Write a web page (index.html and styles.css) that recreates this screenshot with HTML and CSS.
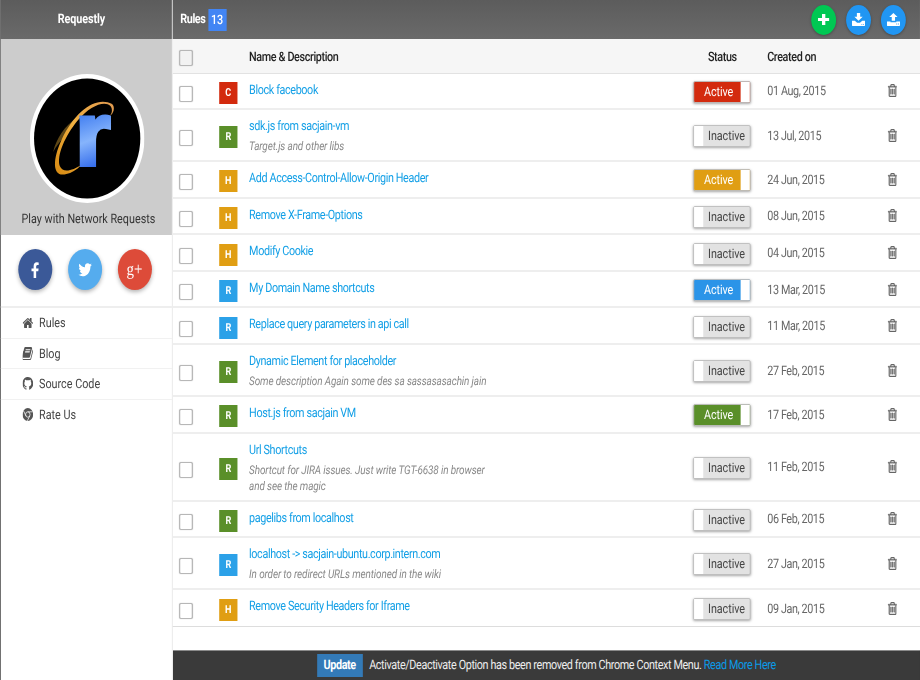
FILE: index.html
```html
<!DOCTYPE html>
<html lang="en">
<head>
<meta charset="utf-8">
<title>Requestly</title>
<link rel="stylesheet" href="styles.css">
</head>
<body>
<svg class="sprite" width="0" height="0" aria-hidden="true">
  <symbol id="i-home" viewBox="64 128 1664 1408"><path d="M1472 992v480q0 26-19 45t-45 19h-384v-384h-256v384h-384q-26 0-45-19t-19-45v-480q0-1 .5-3t.5-3l575-474 575 474q1 2 1 6zm223-69l-62 74q-8 9-21 11h-3q-13 0-21-7l-692-577-692 577q-12 8-24 7-13-2-21-11l-62-74q-8-10-7-23.5t11-21.5l719-599q32-26 76-26t76 26l244 204v-195q0-14 9-23t23-9h192q14 0 23 9t9 23v408l219 182q10 8 11 21.5t-7 23.5z"/></symbol>
  <symbol id="i-book" viewBox="128 128 1536 1536"><path d="M1639 478q40 57 18 129l-275 906q-19 64-76.5 107.5t-122.5 43.5h-923q-77 0-148.5-53.5t-99.5-131.5q-24-67-2-127 0-4 3-27t4-37q1-8-3-21.5t-3-19.5q2-11 8-21t16.5-23.5 16.5-23.5q23-38 45-91.5t30-91.5q3-10 .5-30t-.5-28q3-11 17-28t17-23q21-36 42-92t25-90q1-9-2.5-32t.5-28q4-13 22-30.5t22-22.5q19-26 42.5-84.5t27.5-96.5q1-8-3-25.5t-2-26.5q2-8 9-18t18-23 17-21q8-12 16.5-30.5t15-35 16-36 19.5-32 26.5-23.5 36-11.5 47.5 5.5l-1 3q38-9 51-9h761q74 0 114 56t18 130l-274 906q-36 119-71.5 153.5t-128.5 34.5h-869q-27 0-38 15-11 16-1 43 24 70 144 70h923q29 0 56-15.5t35-41.5l300-987q7-22 5-57 38 15 59 43zm-1064 2q-4 13 2 22.5t20 9.5h608q13 0 25.5-9.5t16.5-22.5l21-64q4-13-2-22.5t-20-9.5h-608q-13 0-25.5 9.5t-16.5 22.5zm-83 256q-4 13 2 22.5t20 9.5h608q13 0 25.5-9.5t16.5-22.5l21-64q4-13-2-22.5t-20-9.5h-608q-13 0-25.5 9.5t-16.5 22.5z"/></symbol>
  <symbol id="i-github" viewBox="128 128 1536 1536"><path d="M896 128q209 0 385.5 103t279.5 279.5 103 385.5q0 251-146.5 451.5t-378.5 277.5q-27 5-40-7t-13-30q0-3 .5-76.5t.5-134.5q0-97-52-142 57-6 102.5-18t94-39 81-66.5 53-105 20.5-150.5q0-119-79-206 37-91-8-204-28-9-81 11t-92 44l-38 24q-93-26-192-26t-192 26q-16-11-42.5-27t-83.5-38.5-85-13.5q-45 113-8 204-79 87-79 206 0 85 20.5 150t52.5 105 80.5 67 94 39 102.5 18q-39 36-49 103-21 10-45 15t-57 5-65.5-21.5-55.5-62.5q-19-32-48.5-52t-49.5-24l-20-3q-21 0-29 4.5t-5 11.5 9 14 13 12l7 5q22 10 43.5 38t31.5 51l10 23q13 38 44 63t67 32 67.5 6.5 54-3.5l22-4q0 36 .5 83.5t.5 51.5q0 18-13 30t-40 7q-232-77-378.5-277.5t-146.5-451.5q0-209 103-385.5t279.5-279.5 385.5-103z"/></symbol>
  <symbol id="i-chrome" viewBox="0 0 16 16"><circle cx="8" cy="8" r="8"/><circle cx="8" cy="8" r="3.3" fill="none" stroke="#fff" stroke-width="1"/><path d="M8 4.7h7M5.2 9.7L1.7 3.6M10.9 9.7L7.3 15.8" fill="none" stroke="#fff" stroke-width="1"/></symbol>
  <symbol id="i-trash" viewBox="128 128 1408 1536" preserveAspectRatio="none"><path d="M704 736v576q0 14-9 23t-23 9h-64q-14 0-23-9t-9-23v-576q0-14 9-23t23-9h64q14 0 23 9t9 23zm256 0v576q0 14-9 23t-23 9h-64q-14 0-23-9t-9-23v-576q0-14 9-23t23-9h64q14 0 23 9t9 23zm256 0v576q0 14-9 23t-23 9h-64q-14 0-23-9t-9-23v-576q0-14 9-23t23-9h64q14 0 23 9t9 23zm128 724v-948h-896v948q0 22 7 40.5t14.5 27 10.5 8.5h832q3 0 10.5-8.5t14.5-27 7-40.5zm-672-1076h448l-48-117q-7-9-17-11h-317q-10 2-17 11zm928 32v64q0 14-9 23t-23 9h-96v948q0 83-47 143.5t-113 60.5h-832q-66 0-113-58.5t-47-141.5v-952h-96q-14 0-23-9t-9-23v-64q0-14 9-23t23-9h309l70-167q15-37 54-63t79-26h320q40 0 79 26t54 63l70 167h309q14 0 23 9t9 23z"/></symbol>
  <symbol id="i-fb" viewBox="384 128 1000 1536"><path d="M1343 12v264h-157q-86 0-116 36t-30 108v189h293l-39 296h-254v759h-306v-759h-255v-296h255v-218q0-186 104-288.5t277-102.5q147 0 228 12z" transform="translate(0 128)"/></symbol>
  <symbol id="i-tw" viewBox="64 256 1664 1344"><path d="M1684 408q-67 98-162 167 1 14 1 42 0 130-38 259.5t-115.5 248.5-184.5 210.5-258 146-323 54.5q-271 0-496-145 35 4 78 4 225 0 401-138-105-2-188-64.5t-114-159.5q33 5 61 5 43 0 85-11-112-23-185.5-111.5t-73.5-205.5v-4q68 38 146 41-66-44-105-115t-39-154q0-88 44-163 121 149 294.5 238.5t371.5 99.5q-8-38-8-74 0-134 94.5-228.5t228.5-94.5q140 0 236 102 109-21 205-78-37 115-142 178 92-10 184-50z"/></symbol>
  <symbol id="i-plus" viewBox="0 0 14 14" preserveAspectRatio="none"><path d="M5 0h4v5h5v4H9v5H5V9H0V5h5z"/></symbol>
  <symbol id="i-down" viewBox="0 0 16 16" preserveAspectRatio="none"><path d="M6 0h4v4.500h3l-5 5-5-5h3z"/><path fill-rule="evenodd" d="M0 9.500h3.500l2.800 2.500h3.400l2.800-2.500H16V15a1 1 0 0 1-1 1H1a1 1 0 0 1-1-1zM11.500 13.500h1v1h-1zM13.500 13.500h1v1h-1z"/></symbol>
  <symbol id="i-up" viewBox="0 0 16 16" preserveAspectRatio="none"><path d="M6 9.500h4V5h3L8 0 3 5h3z"/><path fill-rule="evenodd" d="M0 10.500h4.500v1h7v-1H16V15a1 1 0 0 1-1 1H1a1 1 0 0 1-1-1zM11.500 13h1v1h-1zM13.500 13h1v1h-1z"/></symbol>
</svg>

<div class="frame">
<div class="page">
  <aside class="sidebar">
    <div class="brand">Requestly</div>
    <div class="profile">
      <svg class="logo" viewBox="0 0 138 129" role="img" aria-label="Requestly logo">
        <defs>
          <linearGradient id="arc" x1="0" y1="1" x2="1" y2="0">
            <stop offset="0" stop-color="#d68a12"/>
            <stop offset=".5" stop-color="#f0b040"/>
            <stop offset="1" stop-color="#e09a50"/>
          </linearGradient>
          <linearGradient id="blue" gradientUnits="userSpaceOnUse" x1="0" y1="-50" x2="20" y2="4">
            <stop offset="0" stop-color="#3f7cf0"/>
            <stop offset=".5" stop-color="#86b4fc"/>
            <stop offset="1" stop-color="#2d66ea"/>
          </linearGradient>
        </defs>
        <ellipse cx="69" cy="64.500" rx="69" ry="64.500" fill="#fff"/>
        <ellipse cx="69" cy="64.500" rx="64" ry="60" fill="#000"/>
        <path d="M56 44C42 52 32 64 28 78C32 72 36 68 40 64C44 56 50 50 56 44z" fill="#5e4716"/>
        <path d="M99 30C80 22 55 36 38 66C26 88 28 104 44 100C50 99 56 96 62 91C52 96 40 100 36 92C32 82 42 62 58 46C72 32 90 26 97 32C100 35 99 40 96 42C101 40 103 33 99 30z" fill="url(#arc)"/>
        <text class="logo-r" transform="translate(55 91) scale(1.2 1)" fill="url(#blue)" stroke="url(#blue)" stroke-width="4">r</text>
      </svg>
      <p class="tagline">Play with Network Requests</p>
    </div>
    <div class="social">
      <a class="soc soc-fb"><svg class="soc-i-fb"><use href="#i-fb"/></svg></a>
      <a class="soc soc-tw"><svg class="soc-i-tw"><use href="#i-tw"/></svg></a>
      <a class="soc soc-gp">g+</a>
    </div>
    <nav class="nav">
      <a class="nav-item"><svg class="nav-ic"><use href="#i-home"/></svg><span>Rules</span></a>
      <a class="nav-item"><svg class="nav-ic"><use href="#i-book"/></svg><span>Blog</span></a>
      <a class="nav-item"><svg class="nav-ic"><use href="#i-github"/></svg><span>Source Code</span></a>
      <a class="nav-item"><svg class="nav-ic"><use href="#i-chrome"/></svg><span>Rate Us</span></a>
    </nav>
  </aside>

  <main class="main">
    <header class="topbar">
      <span class="top-title">Rules</span><span class="count">13</span>
      <div class="fabs">
        <a class="fab fab-green"><svg class="fab-plus"><use href="#i-plus"/></svg></a>
        <a class="fab fab-blue"><svg class="fab-ic"><use href="#i-down"/></svg></a>
        <a class="fab fab-blue"><svg class="fab-ic"><use href="#i-up"/></svg></a>
      </div>
    </header>

    <div class="rules">
      <div class="row head">
        <span class="check"></span><span></span><span class="th">Name &amp; Description</span><span class="th th-status">Status</span><span class="th">Created on</span><span></span>
      </div>

      <div class="row"><span class="check"></span><span class="badge red">C</span><div class="info"><a class="name">Block facebook</a></div><span class="toggle on t-red"><b>Active</b><i></i></span><span class="date">01 Aug, 2015</span><svg class="trash"><use href="#i-trash"/></svg></div>

      <div class="row"><span class="check"></span><span class="badge green">R</span><div class="info"><a class="name">sdk.js from sacjain-vm</a><p class="desc">Target.js and other libs</p></div><span class="toggle"><i></i><b>Inactive</b></span><span class="date">13 Jul, 2015</span><svg class="trash"><use href="#i-trash"/></svg></div>

      <div class="row"><span class="check"></span><span class="badge orange">H</span><div class="info"><a class="name">Add Access-Control-Allow-Origin Header</a></div><span class="toggle on t-orange"><b>Active</b><i></i></span><span class="date">24 Jun, 2015</span><svg class="trash"><use href="#i-trash"/></svg></div>

      <div class="row"><span class="check"></span><span class="badge orange">H</span><div class="info"><a class="name">Remove X-Frame-Options</a></div><span class="toggle"><i></i><b>Inactive</b></span><span class="date">08 Jun, 2015</span><svg class="trash"><use href="#i-trash"/></svg></div>

      <div class="row"><span class="check"></span><span class="badge orange">H</span><div class="info"><a class="name">Modify Cookie</a></div><span class="toggle"><i></i><b>Inactive</b></span><span class="date">04 Jun, 2015</span><svg class="trash"><use href="#i-trash"/></svg></div>

      <div class="row"><span class="check"></span><span class="badge blue">R</span><div class="info"><a class="name">My Domain Name shortcuts</a></div><span class="toggle on t-blue"><b>Active</b><i></i></span><span class="date">13 Mar, 2015</span><svg class="trash"><use href="#i-trash"/></svg></div>

      <div class="row"><span class="check"></span><span class="badge blue">R</span><div class="info"><a class="name">Replace query parameters in api call</a></div><span class="toggle"><i></i><b>Inactive</b></span><span class="date">11 Mar, 2015</span><svg class="trash"><use href="#i-trash"/></svg></div>

      <div class="row"><span class="check"></span><span class="badge green">R</span><div class="info"><a class="name">Dynamic Element for placeholder</a><p class="desc">Some description Again some des sa sassasasachin jain</p></div><span class="toggle"><i></i><b>Inactive</b></span><span class="date">27 Feb, 2015</span><svg class="trash"><use href="#i-trash"/></svg></div>

      <div class="row"><span class="check"></span><span class="badge green">R</span><div class="info"><a class="name">Host.js from sacjain VM</a></div><span class="toggle on t-green"><b>Active</b><i></i></span><span class="date">17 Feb, 2015</span><svg class="trash"><use href="#i-trash"/></svg></div>

      <div class="row"><span class="check"></span><span class="badge green">R</span><div class="info"><a class="name">Url Shortcuts</a><p class="desc">Shortcut for JIRA issues. Just write TGT-6638 in browser<br>and see the magic</p></div><span class="toggle"><i></i><b>Inactive</b></span><span class="date">11 Feb, 2015</span><svg class="trash"><use href="#i-trash"/></svg></div>

      <div class="row"><span class="check"></span><span class="badge green">R</span><div class="info"><a class="name">pagelibs from localhost</a></div><span class="toggle"><i></i><b>Inactive</b></span><span class="date">06 Feb, 2015</span><svg class="trash"><use href="#i-trash"/></svg></div>

      <div class="row"><span class="check"></span><span class="badge blue">R</span><div class="info"><a class="name">localhost -&gt; sacjain-ubuntu.corp.intern.com</a><p class="desc">In order to redirect URLs mentioned in the wiki</p></div><span class="toggle"><i></i><b>Inactive</b></span><span class="date">27 Jan, 2015</span><svg class="trash"><use href="#i-trash"/></svg></div>

      <div class="row last"><span class="check"></span><span class="badge orange">H</span><div class="info"><a class="name">Remove Security Headers for Iframe</a></div><span class="toggle"><i></i><b>Inactive</b></span><span class="date">09 Jan, 2015</span><svg class="trash"><use href="#i-trash"/></svg></div>
    </div>

    <footer class="notice">
      <span class="update">Update</span>
      <span>Activate/Deactivate Option has been removed from Chrome Context Menu. <a class="more">Read More Here</a></span>
    </footer>
  </main>
</div>
</div>
</body>
</html>
```

FILE: styles.css
```css
html, body {
  margin: 0;
  height: 100%;
  overflow: hidden;
  background: #fff;
}

.sprite { display: block; }

.frame {
  width: 920px;
  height: 680px;
  overflow: hidden;
}

/* The reference is a horizontally squeezed capture: everything is laid out
   at natural proportions and compressed as a whole. */
.page {
  display: flex;
  width: 1108px;
  height: 680px;
  transform: scaleX(.8303);
  transform-origin: 0 0;
  font-family: Roboto, "Liberation Sans", sans-serif;
  font-size: 13px;
  letter-spacing: -.45px;
  text-rendering: geometricPrecision;
  color: #444;
}

/* Sidebar */
.sidebar {
  flex: none;
  width: 208px;
  box-sizing: border-box;
  border-left: 1px solid #555;
  border-right: 1px solid #e6e6e6;
}
.brand {
  height: 39px;
  line-height: 40px;
  padding-right: 12px;
  text-align: center;
  color: #fff;
  font-weight: 700;
  letter-spacing: -.1px;
  background: linear-gradient(#5c5c5c, #6a6a6a);
}
.profile {
  height: 196px;
  box-sizing: border-box;
  padding-top: 35px;
  background: #cccccc;
  text-align: center;
}
.logo {
  display: block;
  width: 138px;
  height: 129px;
  margin-left: 35px;
}
.logo-r {
  font-family: "Liberation Sans", sans-serif;
  font-weight: 700;
  font-size: 90px;
  letter-spacing: 0;
}
.tagline {
  margin: 7px 0 0;
  padding-left: 5px;
  line-height: 20px;
  letter-spacing: 0;
  color: #333;
}
.social {
  display: flex;
  justify-content: center;
  gap: 19px;
  padding: 14px 4px 16px 0;
  border-bottom: 2px solid #eee;
}
.soc {
  width: 41px;
  height: 41px;
  border-radius: 50%;
  display: flex;
  align-items: center;
  justify-content: center;
  color: #fff;
  fill: #fff;
  box-shadow: 0 2px 5px rgba(0, 0, 0, .3);
}
.soc-fb { background: #3b5998; }
.soc-tw { background: #55acee; }
.soc-gp {
  background: #dd4b39;
  font-family: "Liberation Serif", serif;
  font-size: 18px;
  letter-spacing: 0;
}
.soc-i-fb { width: 10px; height: 16px; }
.soc-i-tw { width: 17px; height: 14px; }

.nav-item {
  display: flex;
  align-items: center;
  height: 30.500px;
  box-sizing: border-box;
  padding-left: 26px;
  border-bottom: 1px solid #f1f1f1;
  letter-spacing: 0;
  color: #444;
}
.nav-item:last-child { border-bottom: 0; }
.nav-item span { padding-top: 2px; }
.nav-ic {
  width: 13px;
  height: 13px;
  margin-right: 7px;
  fill: #555;
}

/* Main column */
.main {
  flex: 1;
  min-width: 0;
  display: flex;
  flex-direction: column;
}
.topbar {
  flex: none;
  height: 39px;
  display: flex;
  align-items: center;
  padding-left: 9px;
  background: linear-gradient(#5c5c5c, #6a6a6a);
  color: #fff;
  font-weight: 700;
}
.count {
  margin-left: 3px;
  width: 22px;
  height: 22px;
  line-height: 23px;
  text-align: center;
  background: #4285f4;
  font-weight: 500;
  letter-spacing: 0;
}
.fabs {
  margin-left: auto;
  margin-right: 17px;
  display: flex;
  gap: 12px;
}
.fab {
  width: 30px;
  height: 30px;
  border-radius: 50%;
  display: flex;
  align-items: center;
  justify-content: center;
  fill: #fff;
  box-shadow: 0 1px 3px rgba(0, 0, 0, .3);
}
.fab-green { background: #00c853; }
.fab-blue { background: #2196f3; }
.fab-plus { width: 14px; height: 11px; }
.fab-ic { width: 16px; height: 13px; }

/* Rules list */
.rules { flex: 1; }
.row {
  display: grid;
  grid-template-columns: 48px 36px 535px 89px 145px 1fr;
  align-items: center;
  min-height: 36.600px;
  box-sizing: border-box;
  padding-left: 8px;
  border-bottom: 2px solid #eeeeee;
}
.row.last { border-bottom: 1px solid #dddddd; }
.row.head {
  min-height: 34.500px;
  background: #f6f6f6;
  border-bottom: 1px solid #e2e2e2;
}
.th {
  padding-top: 4px;
  font-weight: 500;
  color: #222;
}
.th-status { width: 70px; text-align: center; }
.check {
  width: 16px;
  height: 16px;
  margin-top: 6px;
  box-sizing: border-box;
  border: 1px solid #b4b4b4;
  border-radius: 2px;
  background: #fff;
  box-shadow: 0 0 1px #aaa;
}
.head .check { background: #f2f2f2; margin-top: 5px; }
.badge {
  width: 22px;
  height: 22px;
  margin-top: 4px;
  line-height: 22px;
  text-align: center;
  color: #fff;
  font-size: 11px;
  font-weight: 700;
  letter-spacing: 0;
}
.red { background: #d32a0e; }
.green { background: #5a8f29; }
.orange { background: #e09e13; }
.blue { background: #2ba1e8; }

.info {
  align-self: start;
  padding: 6px 0 6px;
}
.name {
  display: block;
  line-height: 22px;
  margin-bottom: -2px;
  color: #129fe6;
}
.desc {
  margin: 2px 0 0;
  line-height: 16px;
  font-size: 12px;
  font-style: italic;
  letter-spacing: -.15px;
  color: #8a8a8a;
}

.toggle {
  display: flex;
  width: 69px;
  height: 22px;
  margin-top: 2px;
  box-sizing: border-box;
  border: 1px solid #bdbdbd;
  border-radius: 2px;
  background: #e2e2e2;
  box-shadow: 0 1px 3px rgba(0, 0, 0, .35);
  line-height: 21px;
  letter-spacing: -.1px;
  text-align: center;
  color: #444;
}
.toggle b {
  flex: 1;
  font-weight: 400;
}
.toggle i {
  flex: none;
  width: 11px;
  background: #fff;
}
.toggle.on { color: #fff; }
.toggle.on b { padding-left: 3px; }
.t-red { background: #d32a0e; }
.t-orange { background: #e09e13; }
.t-blue { background: #2b94e8; }
.t-green { background: #5a8f29; }

.date {
  padding-top: 2px;
  color: #666;
}
.trash {
  width: 11px;
  height: 13px;
  fill: #666;
  stroke: #666;
  stroke-width: 50;
  overflow: visible;
}

/* Bottom notice */
.notice {
  flex: none;
  height: 30px;
  box-sizing: border-box;
  display: flex;
  align-items: center;
  justify-content: center;
  gap: 8px;
  border-top: 1px solid #8a8a8a;
  background: #3a3a3a;
  color: #eee;
}
.update {
  width: 55px;
  height: 23px;
  line-height: 23px;
  text-align: center;
  background: #337ab7;
  color: #fff;
  font-weight: 700;
}
.more { color: #0a9be8; }
```
